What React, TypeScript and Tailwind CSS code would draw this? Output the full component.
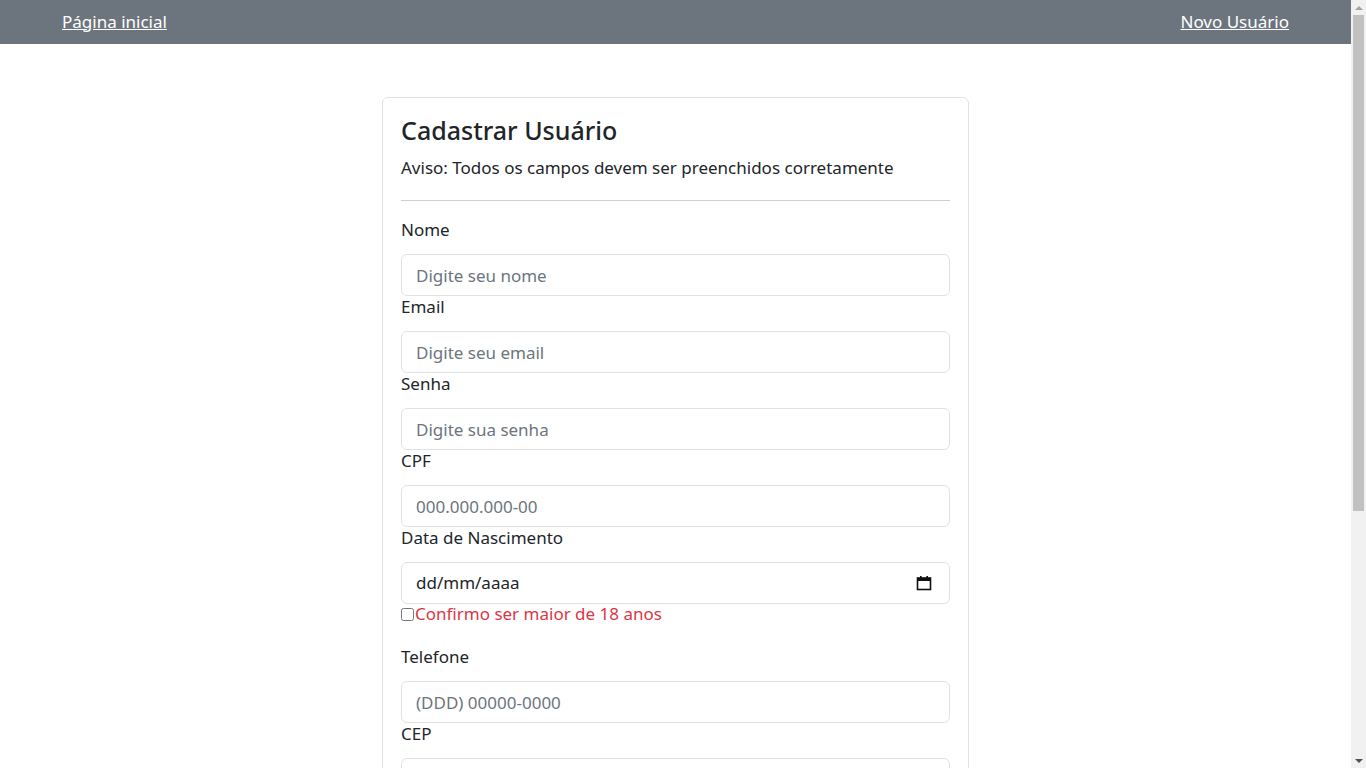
import React from "react";

const font = { fontFamily: '"Noto Sans", "Open Sans", sans-serif' };

function Field({ label, placeholder, type = "text" }: { label: string; placeholder: string; type?: string }) {
  return (
    <div className="flex flex-col">
      <label className="text-[17px] leading-[22px] text-[#212529] mb-[13px]">{label}</label>
      <input
        type={type}
        placeholder={placeholder}
        className="h-[42px] w-full rounded-[6px] border border-[#dee2e6] px-[14px] text-[17px] text-[#212529] placeholder:text-[#6c757d] outline-none"
      />
    </div>
  );
}

function Scrollbar() {
  return (
    <div className="fixed top-0 right-0 h-screen w-[15px] bg-[#f1f1f1] flex flex-col items-center">
      <div className="h-[15px] flex items-center justify-center">
        <div className="w-0 h-0 border-l-[4px] border-r-[4px] border-b-[4px] border-l-transparent border-r-transparent border-b-[#a3a3a3]" />
      </div>
      <div className="w-[11px] h-[496px] bg-[#c1c1c1]" />
      <div className="flex-1" />
      <div className="h-[15px] flex items-center justify-center">
        <div className="w-0 h-0 border-l-[4px] border-r-[4px] border-t-[4px] border-l-transparent border-r-transparent border-t-[#505050]" />
      </div>
    </div>
  );
}

export default function App() {
  return (
    <div className="min-h-screen bg-white text-[#212529]" style={font}>
      <div className="mr-[15px]">
        <nav className="h-[44px] bg-[#6c757d] flex items-center justify-between px-[62px] pb-[1px]">
          <a href="#" className="text-white underline text-[17px] leading-[24px]">Página inicial</a>
          <a href="#" className="text-white underline text-[17px] leading-[24px]">Novo Usuário</a>
        </nav>

        <div className="flex justify-center pt-[53px] pb-[53px]">
          <div className="w-[587px] rounded-[6px] border border-[#dee2e6] p-[18px]">
            <h4 className="text-[25px] leading-[29px] font-medium mb-[9px]">Cadastrar Usuário</h4>
            <p className="text-[17px] leading-[27px]">Aviso: Todos os campos devem ser preenchidos corretamente</p>
            <hr className="mt-[19px] mb-[18px] border-t border-[#cfcfcf]" />

            <div className="flex flex-col">
              <Field label="Nome" placeholder="Digite seu nome" />
              <Field label="Email" placeholder="Digite seu email" type="email" />
              <Field label="Senha" placeholder="Digite sua senha" type="password" />
              <Field label="CPF" placeholder="000.000.000-00" />
              <div className="flex flex-col">
                <label className="text-[17px] leading-[22px] mb-[13px]">Data de Nascimento</label>
                <div className="h-[42px] w-full rounded-[6px] border border-[#dee2e6] px-[14px] flex items-center justify-between text-[17px]">
                  <span>dd/mm/aaaa</span>
                  <svg width="16" height="16" viewBox="0 0 16 16" className="mr-[3px]">
                    <rect x="1.5" y="3" width="13" height="11.5" fill="none" stroke="#111" strokeWidth="1.6" />
                    <rect x="1.5" y="3" width="13" height="3" fill="#111" />
                    <rect x="4" y="1" width="1.6" height="3" fill="#111" />
                    <rect x="10.4" y="1" width="1.6" height="3" fill="#111" />
                  </svg>
                </div>
              </div>
            </div>

            <div className="flex items-center mb-[21px] leading-[22px] -mt-[1px]">
              <input type="checkbox" className="w-[13px] h-[13px] m-0 mr-[1px]" />
              <span className="text-[17px] leading-[22px] text-[#dc3545]">Confirmo ser maior de 18 anos</span>
            </div>

            <div className="flex flex-col">
              <Field label="Telefone" placeholder="(DDD) 00000-0000" />
              <Field label="CEP" placeholder="00000-000" />
              <Field label="Endereço" placeholder="Digite seu endereço" />
              <Field label="Cidade" placeholder="Digite sua cidade" />
            </div>

            <button className="mt-[18px] h-[42px] px-[18px] rounded-[6px] bg-[#0d6efd] text-white text-[17px]">
              Cadastrar
            </button>
          </div>
        </div>
      </div>
      <Scrollbar />
    </div>
  );
}
